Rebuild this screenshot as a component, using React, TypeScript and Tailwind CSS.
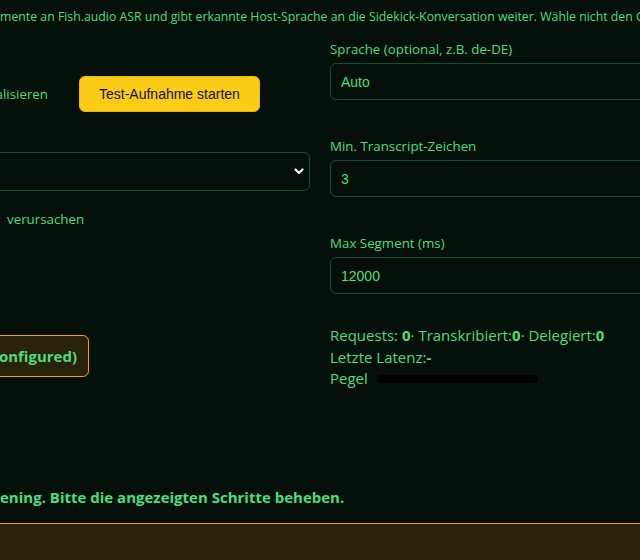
import React from "react";

const sans = "font-['Open_Sans',sans-serif]";
const arial = "font-['Liberation_Sans',Arial,sans-serif]";

function Field({ label, value }: { label: string; value: string }) {
  return (
    <div className="flex flex-col">
      <label className="text-[13.33px] leading-[18px]">{label}</label>
      <input
        readOnly
        value={value}
        className={`mt-[5px] h-[37px] w-full rounded-[6px] border border-[#1d4a2a] bg-transparent px-[10px] text-[14px] text-[#4ade80] outline-none ${arial}`}
      />
    </div>
  );
}

export default function App() {
  return (
    <div className={`flex h-[560px] w-[640px] flex-col overflow-hidden bg-[#06100a] text-[#4ade80] ${sans}`}>
      <main className="flex-1 overflow-hidden">
        <div className="ml-[-330px] w-[1300px] pt-[8px]">
          <p className="whitespace-nowrap text-[12.3px] leading-[18px]">
            <span className="inline-block w-[330px] text-right">Sendet Audio-Seg</span>
            mente an Fish.audio ASR und gibt erkannte Host-Sprache an die Sidekick-Konversation weiter. Wähle nicht den Capture-Kanal des Streams.
          </p>

          <div className="mt-[14px] grid grid-cols-2 gap-x-[20px]">
            {/* capture controls */}
            <div className="flex flex-col">
              <div className="mt-[36px] flex items-center gap-[31px]">
                <span className="inline-block w-[378px] whitespace-nowrap text-right text-[13.33px] leading-[18px]">
                  Live-Pegel visualisieren
                </span>
                <button className={`h-[36px] rounded-[6px] border border-[#eab308] bg-[#facc15] px-[19px] text-[14px] text-[#111] ${arial}`}>
                  Test-Aufnahme starten
                </button>
              </div>

              <div className="relative mt-[40px]">
                <select className="h-[39px] w-full appearance-none rounded-[6px] border border-[#1d4a2a] bg-transparent px-[10px] text-[14px] text-[#4ade80] outline-none">
                  <option>Standard-Mikrofon</option>
                </select>
                <svg
                  className="pointer-events-none absolute right-[6px] top-[16px]"
                  width="10"
                  height="7"
                  viewBox="0 0 10 7"
                  fill="none"
                >
                  <path d="M1.5 1.5 L5 5 L8.5 1.5" stroke="#f3f4f6" strokeWidth="2.2" strokeLinecap="round" strokeLinejoin="round" />
                </svg>
              </div>

              <p className="mt-[19px] whitespace-nowrap text-[13.33px] leading-[18px]">
                <span className="inline-block w-[330px] text-right">Lautsprecher können Echo</span>
                <span className="ml-[7px]">verursachen</span>
              </p>

              <div className="mt-[107px] flex w-[419px] justify-end">
                <span className="whitespace-nowrap rounded-[6px] border border-[#f59e0b] bg-[#2a220a] px-[11px] py-[9px] text-[15px] font-bold leading-[22px]">
                  ASR (not configured)
                </span>
              </div>
            </div>

            {/* ASR settings */}
            <div className="flex flex-col">
              <div className="flex flex-col gap-[37px]">
                <Field label="Sprache (optional, z.B. de-DE)" value="Auto" />
                <Field label="Min. Transcript-Zeichen" value="3" />
                <Field label="Max Segment (ms)" value="12000" />
              </div>

              <div className="mt-[31px] text-[15px] leading-[21.5px]">
                <div className="whitespace-nowrap">
                  Requests: <b>0</b>· Transkribiert:<b>0</b>· Delegiert:<b>0</b>
                </div>
                <div>
                  Letzte Latenz:<b>-</b>
                </div>
                <div className="flex items-center gap-[10px]">
                  <span>Pegel</span>
                  <div className="h-[8px] w-[160px] rounded-full bg-[#010201]" />
                </div>
              </div>
            </div>
          </div>

          <p className="mt-[96px] whitespace-nowrap text-[15px] font-bold leading-[22px]">
            <span className="inline-block w-[330px] text-right">Kein List</span>ening. Bitte die angezeigten Schritte beheben.
          </p>
        </div>
      </main>

      <footer className="h-[37px] shrink-0 border-t border-[#f59e0b] bg-[#2a220a]" />
    </div>
  );
}
